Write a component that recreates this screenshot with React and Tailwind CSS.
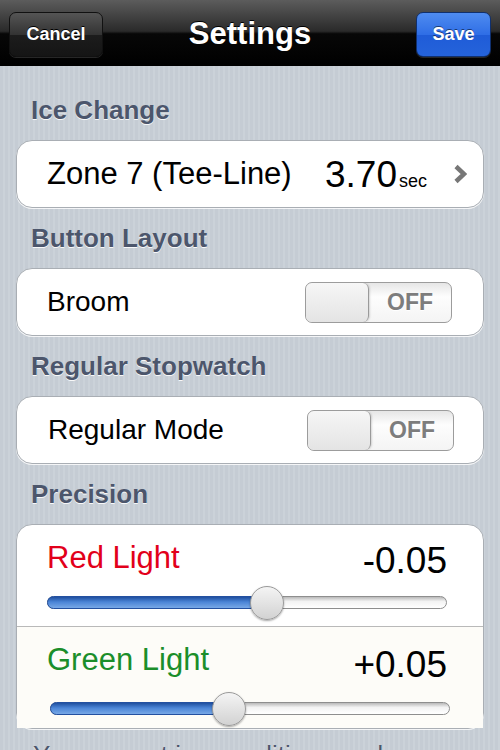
import React from 'react';

const font = { fontFamily: '"Liberation Sans", Arial, Helvetica, sans-serif' };

const SectionHeader = ({ children }) => (
  <div className="pt-[15px] pb-[15px] pl-[15px] text-[26px] leading-[30px] font-bold text-[#4c566c] [text-shadow:0_1px_0_rgba(255,255,255,0.9)]">
    {children}
  </div>
);

const Card = ({ className = '', children }) => (
  <div
    className={`rounded-[16px] border border-[#a9aeb4] bg-white shadow-[0_1px_0_rgba(255,255,255,0.8)] ${className}`}
  >
    {children}
  </div>
);

const Switch = () => (
  <div className="flex h-[41px] w-[147px] overflow-hidden rounded-[7px] border border-[#9c9c9c] bg-[linear-gradient(#e6e6e6,#fdfdfd_35%,#f4f4f4)]">
    <div className="h-full w-[63px] rounded-[6px] border-r border-[#9a9a9a] bg-[linear-gradient(#f6f6f6,#e4e4e4)] shadow-[1px_0_2px_rgba(0,0,0,0.15)]" />
    <div className="flex flex-1 items-center justify-center text-[23px] font-bold text-[#7d7d7d] [text-shadow:0_1px_0_#fff]">
      OFF
    </div>
  </div>
);

const Slider = ({ value, className = '' }) => (
  <div className={`relative h-[13px] ${className}`}>
    <div className="absolute inset-0 rounded-full border border-[#8e8e8e] bg-[linear-gradient(#b9b9b9,#f3f3f3_40%,#ffffff)]" />
    <div
      className="absolute left-0 top-0 h-full rounded-l-full border border-[#2350a0] bg-[linear-gradient(#1f4f9f,#4a84d6_45%,#78a8e6)]"
      style={{ width: `${value}%` }}
    />
    <div
      className="absolute top-1/2 h-[34px] w-[34px] -translate-x-1/2 -translate-y-1/2 rounded-full border border-[#9a9a9a] bg-[linear-gradient(#f4f4f4,#d2d2d2)] shadow-[0_1px_2px_rgba(0,0,0,0.35)]"
      style={{ left: `${value}%` }}
    />
  </div>
);

const Chevron = () => (
  <svg width="13" height="22" viewBox="0 0 13 22">
    <polyline points="2,3.5 10,11 2,18.5" fill="none" stroke="#777777" strokeWidth="4.5" />
  </svg>
);

export default function App() {
  return (
    <div
      className="flex h-[750px] w-[500px] flex-col overflow-hidden bg-[repeating-linear-gradient(90deg,#c5ccd4_0px,#c5ccd4_3px,#cbd2d9_3px,#cbd2d9_5px)]"
      style={font}
    >
      {/* nav bar */}
      <div className="grid h-[66px] shrink-0 grid-cols-[1fr_auto_1fr] items-center border-b border-black bg-[linear-gradient(#5c5c5c,#2a2a2a_48%,#070707_52%,#000)] px-[9px] pt-[3px]">
        <button className="h-[45px] w-[94px] justify-self-start rounded-[7px] border border-[#111] bg-[linear-gradient(#555,#333_50%,#1c1c1c_52%,#151515)] text-[18px] font-bold text-white shadow-[0_1px_0_rgba(255,255,255,0.15)] [text-shadow:0_-1px_0_#000]">
          Cancel
        </button>
        <div className="text-[31px] font-bold text-white [text-shadow:0_-1px_0_#000]">Settings</div>
        <button className="h-[45px] w-[75px] justify-self-end rounded-[7px] border border-[#10306e] bg-[linear-gradient(#4f8cf0,#2f6ee6_50%,#1f5cd8_52%,#2563da)] text-[18px] font-bold text-white shadow-[0_1px_0_rgba(255,255,255,0.15)] [text-shadow:0_-1px_0_rgba(0,0,0,0.5)]">
          Save
        </button>
      </div>

      <div className="flex flex-col px-[16px] pt-[14px]">
        <SectionHeader>Ice Change</SectionHeader>
        <Card className="flex h-[68px] items-center pl-[30px] pr-[16px]">
          <span className="text-[31px] text-black">Zone 7 (Tee-Line)</span>
          <span className="ml-auto flex items-baseline text-black">
            <span className="text-[37px] leading-none">3.70</span>
            <span className="ml-[2px] text-[18px] leading-none">sec</span>
          </span>
          <span className="ml-[27px] flex">
            <Chevron />
          </span>
        </Card>

        <SectionHeader>Button Layout</SectionHeader>
        <Card className="flex h-[68px] items-center justify-between pl-[30px] pr-[31px]">
          <span className="text-[28px] text-black">Broom</span>
          <Switch />
        </Card>

        <SectionHeader>Regular Stopwatch</SectionHeader>
        <Card className="flex h-[68px] items-center justify-between pl-[31px] pr-[29px]">
          <span className="text-[28px] text-black">Regular Mode</span>
          <Switch />
        </Card>

        <SectionHeader>Precision</SectionHeader>
        <Card className="flex flex-col bg-[#fefcfc]">
          <div className="h-[101px] pl-[30px] pr-[36px] pt-[15px]">
            <div className="flex items-start justify-between">
              <span className="text-[31px] leading-[36px] text-[#e2001a]">Red Light</span>
              <span className="mt-[3px] text-[37px] leading-[36px] text-black">-0.05</span>
            </div>
            <Slider value={55} className="mt-[17px]" />
          </div>
          <div className="h-[102px] border-t border-[#b9b9b9] bg-[#fdfcf8] pl-[30px] pr-[36px] pt-[15px]">
            <div className="flex items-start justify-between">
              <span className="text-[31px] leading-[36px] text-[#1b8e2a]">Green Light</span>
              <span className="mt-[5px] text-[37px] leading-[36px] text-black">+0.05</span>
            </div>
            <Slider value={44.75} className="ml-[3px] mr-[-3px] mt-[19px]" />
          </div>
        </Card>

        <div className="mt-[11px] pl-[17px] text-[26px] leading-[30px] text-[#4c566c] [text-shadow:0_1px_0_rgba(255,255,255,0.9)]">
          You can set ice conditions and precision.
        </div>
      </div>
    </div>
  );
}
